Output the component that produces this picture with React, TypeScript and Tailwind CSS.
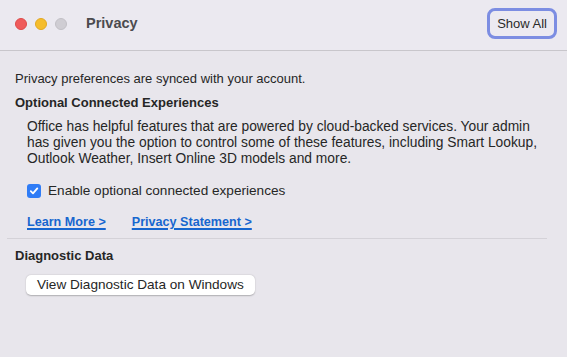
export default function App() {
  return (
    <div
      className="w-[567px] h-[357px] bg-[#e8e6ec] text-[#262626] overflow-hidden flex flex-col"
      style={{ fontFamily: '"Liberation Sans", Arial, sans-serif' }}
    >
      {/* title bar */}
      <div className="h-[51px] shrink-0 bg-[#ebe9f0] border-b border-[#c8c6cb] flex items-center pl-[15px] pr-[10px] pb-[3px]">
        <div className="flex items-center gap-[8px]">
          <span className="w-[12px] h-[12px] rounded-full bg-[#ef5b5b] border border-[#de4a4a]" />
          <span className="w-[12px] h-[12px] rounded-full bg-[#f5bd2c] border border-[#e2a822]" />
          <span className="w-[12px] h-[12px] rounded-full bg-[#cfcdd3] border border-[#c2c0c6]" />
        </div>
        <div className="ml-[19px] text-[14.5px] font-bold text-[#4b4b4f]">Privacy</div>
        <button className="ml-auto h-[31px] px-[7px] rounded-[8px] border-[3px] border-[#7c8de2] bg-[#eceaf1] text-[13px] text-[#2a2a2a]">
          Show All
        </button>
      </div>

      {/* body */}
      <div className="pt-[20px] pl-[15px] text-[13px] leading-[16px]">
        <p>Privacy preferences are synced with your account.</p>
        <h2 className="mt-[8px] font-bold">Optional Connected Experiences</h2>
        <p className="mt-[8px] ml-[12px] w-[512px] text-[13.8px] leading-[16px]">
          Office has helpful features that are powered by cloud-backed services. Your admin has given you the option
          to control some of these features, including Smart Lookup, Outlook Weather, Insert Online 3D models and
          more.
        </p>
        <label className="mt-[16px] pl-[12px] flex items-center gap-[7px]">
          <span className="w-[14px] h-[14px] rounded-[3px] bg-[#2f7cf6] flex items-center justify-center">
            <svg width="10" height="10" viewBox="0 0 10 10" fill="none">
              <path d="M1.8 5.2 L4 7.4 L8.3 2.4" stroke="white" strokeWidth="1.8" strokeLinecap="round" strokeLinejoin="round" />
            </svg>
          </span>
          <span className="text-[13.6px]">Enable optional connected experiences</span>
        </label>
        <div className="mt-[15px] pl-[12px] flex gap-[26px] text-[12.6px] font-bold text-[#1766cf]">
          <a className="underline underline-offset-[2px] decoration-[1.5px]">Learn More &gt;</a>
          <a className="underline underline-offset-[2px] decoration-[1.5px]">Privacy Statement &gt;</a>
        </div>
      </div>
      <div className="mt-[8px] ml-[7px] w-[540px] border-t border-[#d4d2d8]" />
      <div className="pt-[9px] pl-[15px] text-[13px] leading-[16px]">
        <h2 className="font-bold">Diagnostic Data</h2>
        <button className="mt-[11px] ml-[11px] h-[20px] px-[11px] rounded-[5px] bg-white text-[13.6px] text-[#262626] shadow-[0_0.5px_1.5px_rgba(0,0,0,0.25)] flex items-center">
          View Diagnostic Data on Windows
        </button>
      </div>
    </div>
  );
}
